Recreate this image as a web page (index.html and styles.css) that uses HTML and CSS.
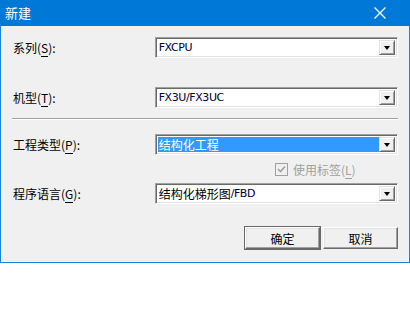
FILE: index.html
```html
<!DOCTYPE html>
<html lang="zh-CN">
<head>
    <meta charset="UTF-8">
    <title>新建</title>
    <link rel="stylesheet" href="styles.css">
</head>
<body>
    <div class="window">
        <div class="titlebar">
            <span class="title">新建</span>
            <svg class="close" width="12" height="12" viewBox="0 0 12 12">
                <path d="M0.5 0.5 L11.5 11.5 M11.5 0.5 L0.5 11.5" stroke="#fff" stroke-width="1.3" fill="none"/>
            </svg>
        </div>
        <div class="content">
            <div class="row row-first">
                <label class="lbl">系列(<u>S</u>):</label>
                <div class="combo">
                    <span class="combo-text latin">FXCPU</span>
                    <span class="drop"><i class="tri"></i></span>
                </div>
            </div>
            <div class="row row-second">
                <label class="lbl">机型(<u>T</u>):</label>
                <div class="combo">
                    <span class="combo-text latin">FX3U/FX3UC</span>
                    <span class="drop"><i class="tri"></i></span>
                </div>
            </div>
            <div class="separator"></div>
            <div class="row row-third">
                <label class="lbl">工程类型(<u>P</u>):</label>
                <div class="combo">
                    <span class="combo-text cjk selected">结构化工程</span>
                    <span class="drop"><i class="tri"></i></span>
                </div>
            </div>
            <div class="check-row">
                <span class="checkbox">
                    <svg width="9" height="9" viewBox="0 0 9 9">
                        <path d="M1 4 L3.5 6.5 L8 1.5" stroke="#a0a0a0" stroke-width="1.6" fill="none"/>
                    </svg>
                </span>
                <span class="check-label">使用标签(<u>L</u>)</span>
            </div>
            <div class="row row-fourth">
                <label class="lbl">程序语言(<u>G</u>):</label>
                <div class="combo">
                    <span class="combo-text cjk">结构化梯形图<span class="latin-inline">/FBD</span></span>
                    <span class="drop"><i class="tri"></i></span>
                </div>
            </div>
            <div class="buttons">
                <button class="btn btn-default">确定</button>
                <button class="btn">取消</button>
            </div>
        </div>
    </div>
</body>
</html>
```

FILE: styles.css
```css
body {
    margin: 0;
    background-color: #ffffff;
    font-family: "Noto Sans CJK SC", "DejaVu Sans", sans-serif;
}

.window {
    width: 408px;
    height: 262px;
    border: 1px solid #1883d7;
    border-top: none;
    background-color: #f0f0f0;
}

.titlebar {
    height: 26px;
    margin: 0 -1px;
    background-color: #0078d7;
    display: flex;
    align-items: center;
    justify-content: space-between;
    padding: 0 24px 0 5px;
}

.title {
    color: #ffffff;
    font-size: 13px;
    line-height: 26px;
}

.close {
    display: block;
}

.content {
    padding: 11px 11px 0 11px;
}

.row {
    display: flex;
    align-items: center;
    height: 21px;
}

.row-second {
    margin-top: 29px;
}

.row-third {
    margin-top: 14px;
}

.row-fourth {
    margin-top: 6px;
}

.lbl {
    width: 142px;
    font-size: 12px;
    color: #000000;
    padding-left: 1px;
}

.lbl u, .check-label u {
    text-decoration: none;
    border-bottom: 1px solid currentColor;
    line-height: 1;
}

.combo {
    box-sizing: border-box;
    width: 244px;
    height: 21px;
    display: flex;
    align-items: stretch;
    border: 1px solid;
    border-color: #a0a0a0 #ffffff #ffffff #a0a0a0;
    box-shadow: inset 1px 1px 0 #696969, inset -1px -1px 0 #e3e3e3;
    padding: 2px;
    background-color: #ffffff;
}

.combo-text {
    flex: 1;
    display: flex;
    align-items: center;
    padding-left: 1px;
    color: #000000;
    white-space: nowrap;
}

.latin {
    font-family: "DejaVu Sans", sans-serif;
    font-size: 11px;
    letter-spacing: -0.4px;
    color: #000033;
}

.cjk {
    font-family: "Noto Sans CJK SC", sans-serif;
    font-size: 12px;
}

.latin-inline {
    font-family: "DejaVu Sans", sans-serif;
    font-size: 11px;
    letter-spacing: -0.4px;
    color: #000033;
}

.selected {
    background-color: #3399ff;
    color: #ffffff;
}

.drop {
    width: 16px;
    height: 15px;
    box-sizing: border-box;
    border: 1px solid;
    border-color: #e3e3e3 #696969 #696969 #e3e3e3;
    box-shadow: inset 1px 1px 0 #ffffff, inset -1px -1px 0 #a0a0a0;
    background-color: #f0f0f0;
    display: flex;
    align-items: center;
    justify-content: center;
}

.tri {
    display: block;
    width: 0;
    height: 0;
    margin-top: 1px;
    border-left: 3.5px solid transparent;
    border-right: 3.5px solid transparent;
    border-top: 4px solid #000000;
}

.separator {
    margin-top: 10px;
    height: 0;
    border-top: 1px solid #a0a0a0;
    border-bottom: 1px solid #ffffff;
}

.check-row {
    display: flex;
    align-items: center;
    margin-top: 7px;
    padding-left: 263px;
    height: 15px;
}

.checkbox {
    width: 11px;
    height: 11px;
    border: 1px solid #a0a0a0;
    background-color: #f0f0f0;
    display: flex;
    align-items: center;
    justify-content: center;
}

.check-label {
    margin-left: 5px;
    font-size: 12px;
    color: #a0a0a0;
}

.buttons {
    display: flex;
    justify-content: flex-end;
    gap: 3px;
    margin-top: 23px;
}

.btn {
    width: 75px;
    height: 22px;
    padding: 0;
    font-family: "Noto Sans CJK SC", sans-serif;
    font-size: 12px;
    color: #000000;
    background-color: #f0f0f0;
    border: 1px solid;
    border-color: #ffffff #696969 #696969 #ffffff;
    box-shadow: inset -1px -1px 0 #a0a0a0, inset 1px 1px 0 #e3e3e3;
}

.btn-default {
    outline: 1px solid #696969;
    outline-offset: 0;
}
```
